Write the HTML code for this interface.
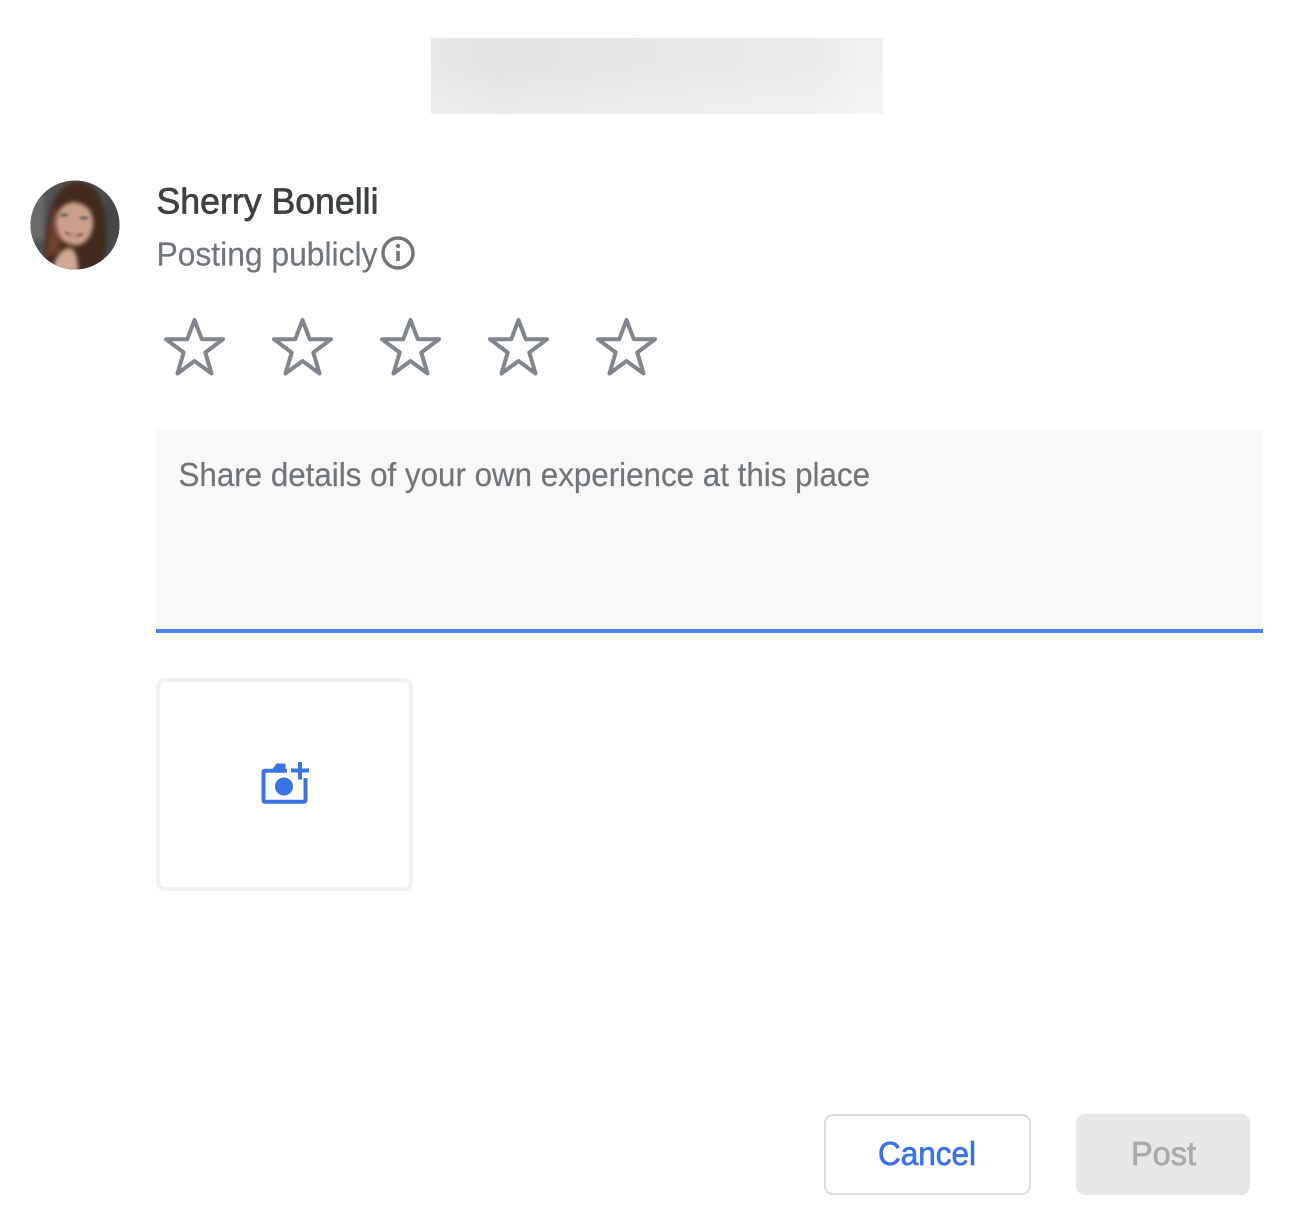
<!DOCTYPE html>
<html lang="en">
<head>
<meta charset="utf-8">
<title>Review</title>
<style>
html,body{margin:0;padding:0;background:#fff;}
body{width:1295px;height:1221px;overflow:hidden;position:relative;}
svg{position:absolute;left:0;top:0;display:block;}
text{font-family:"Liberation Sans",sans-serif;}
</style>
</head>
<body>
<svg width="1295" height="1221" viewBox="0 0 1295 1221" xmlns="http://www.w3.org/2000/svg">
<defs>
  <linearGradient id="top" x1="0" y1="0" x2="1" y2="0">
    <stop offset="0" stop-color="#e8e8e8"/>
    <stop offset="0.15" stop-color="#e3e3e3"/>
    <stop offset="0.55" stop-color="#e8e8e8"/>
    <stop offset="0.85" stop-color="#ebebeb"/>
    <stop offset="0.95" stop-color="#f1f1f1"/>
    <stop offset="1" stop-color="#f1f1f1"/>
  </linearGradient>
  <linearGradient id="topv" x1="0" y1="0" x2="0" y2="1">
    <stop offset="0" stop-color="#fff" stop-opacity="0"/>
    <stop offset="0.35" stop-color="#fff" stop-opacity="0"/>
    <stop offset="1" stop-color="#fff" stop-opacity=".3"/>
  </linearGradient>
  <clipPath id="av"><circle cx="75" cy="225" r="44.5"/></clipPath>
  <filter id="b3" x="-30%" y="-30%" width="160%" height="160%"><feGaussianBlur stdDeviation="2.500"/></filter>
  <filter id="b1" x="-30%" y="-30%" width="160%" height="160%"><feGaussianBlur stdDeviation="2"/></filter>
  <filter id="b0" x="-30%" y="-30%" width="160%" height="160%"><feGaussianBlur stdDeviation="1"/></filter>
  <g id="star"><path d="M194.500 320 L201.800 339.300 H223 L205.300 352.500 L211.500 373.500 L194.500 361 L177.500 373.500 L183.700 352.500 L166 339.300 H187.200 Z" fill="none" stroke="#80868b" stroke-width="4" stroke-linejoin="round"/></g>
</defs>

<rect x="431" y="38" width="452" height="76" fill="url(#top)"/>
<rect x="431" y="38" width="452" height="76" fill="url(#topv)"/>

<!-- avatar -->
<g clip-path="url(#av)">
  <rect x="28" y="178" width="94" height="94" fill="#525252"/>
  <g filter="url(#b3)">
    <rect x="26" y="195" width="18" height="45" fill="#6a6a6a"/>
    <rect x="105" y="190" width="18" height="70" fill="#464646"/>
    <path d="M44 262 C46 232 44 192 76 181 C103 181 110 215 106 250 C104 262 98 270 90 272 L50 272 Z" fill="#43291f"/>
    <path d="M46 258 C50 235 50 215 56 205 L60 250 Z" fill="#70432f"/>
    <path d="M88 205 C98 215 100 240 92 268 L82 270 Z" fill="#3f2a22"/>
  </g>
  <g filter="url(#b1)">
    <path d="M56 226 C55 212 62 203 74 202 C88 204 94 212 93 226 C91 240 82 247 73 245 C63 243 58 238 56 226 Z" fill="#c9a08d"/>
    <path d="M52 272 C55 256 62 248 70 248 C76 250 78 258 78 272 Z" fill="#cfa994"/>
  </g>
  <g filter="url(#b0)">
    <ellipse cx="64" cy="215" rx="4.500" ry="1.800" fill="#6e6560"/>
    <ellipse cx="84" cy="218" rx="4.500" ry="1.800" fill="#6e6560"/>
    <path d="M65 232 Q73 240 83 234 Q74 236 65 232 Z" fill="#eee8e4" stroke="#8b4a43" stroke-width="1.200"/>
  </g>
</g>

<text x="156.500" y="213.500" font-size="36" fill="#3c4043" stroke="#3c4043" stroke-width=".7" textLength="222" lengthAdjust="spacingAndGlyphs">Sherry Bonelli</text>
<text x="156.500" y="265.500" font-size="33" fill="#70757a" stroke="#70757a" stroke-width=".2" textLength="221" lengthAdjust="spacingAndGlyphs">Posting publicly</text>

<!-- info icon -->
<circle cx="398" cy="253" r="15" fill="none" stroke="#70757a" stroke-width="3.400"/>
<rect x="396.200" y="251" width="3.600" height="10" fill="#70757a"/>
<circle cx="398" cy="246" r="2.200" fill="#70757a"/>

<!-- stars -->
<use href="#star"/>
<use href="#star" x="108"/>
<use href="#star" x="216"/>
<use href="#star" x="324"/>
<use href="#star" x="432"/>

<!-- text area -->
<rect x="156" y="430" width="1107" height="199" fill="#f8f8f8"/>
<rect x="156" y="629" width="1107" height="4" fill="#4f81ee"/>
<text x="178.500" y="486" font-size="33" fill="#70757a" stroke="#70757a" stroke-width=".2" textLength="691.500" lengthAdjust="spacingAndGlyphs">Share details of your own experience at this place</text>

<!-- photo box -->
<rect x="158" y="680" width="253" height="209" rx="7" fill="#fff" stroke="#f1f1f1" stroke-width="4"/>
<path d="M287 770.800 H265 Q263.500 770.800 263.500 772.300 V800 Q263.500 801.700 265 801.700 H303.500 Q305.500 801.700 305.500 800 V778" fill="none" stroke="#3b73e4" stroke-width="4"/>
<path d="M271 771 L276.500 763.500 H285.500 V771 Z" fill="#3b73e4"/>
<circle cx="284" cy="786.500" r="9" fill="#3b73e4"/>
<rect x="291" y="768.500" width="18" height="4" fill="#3b73e4"/>
<rect x="298" y="762" width="4" height="17.500" fill="#3b73e4"/>

<!-- buttons -->
<rect x="825" y="1115" width="205" height="79" rx="8" fill="#fff" stroke="#dadce0" stroke-width="2"/>
<text x="878" y="1165" font-size="33" fill="#3b73e4" stroke="#3b73e4" stroke-width=".7" textLength="98" lengthAdjust="spacingAndGlyphs">Cancel</text>
<rect x="1076" y="1114" width="174" height="81" rx="9" fill="#e6e7e7"/>
<text x="1131" y="1165" font-size="33" fill="#a9aaaa" stroke="#a9aaaa" stroke-width=".7" textLength="65" lengthAdjust="spacingAndGlyphs">Post</text>
</svg>
</body>
</html>
